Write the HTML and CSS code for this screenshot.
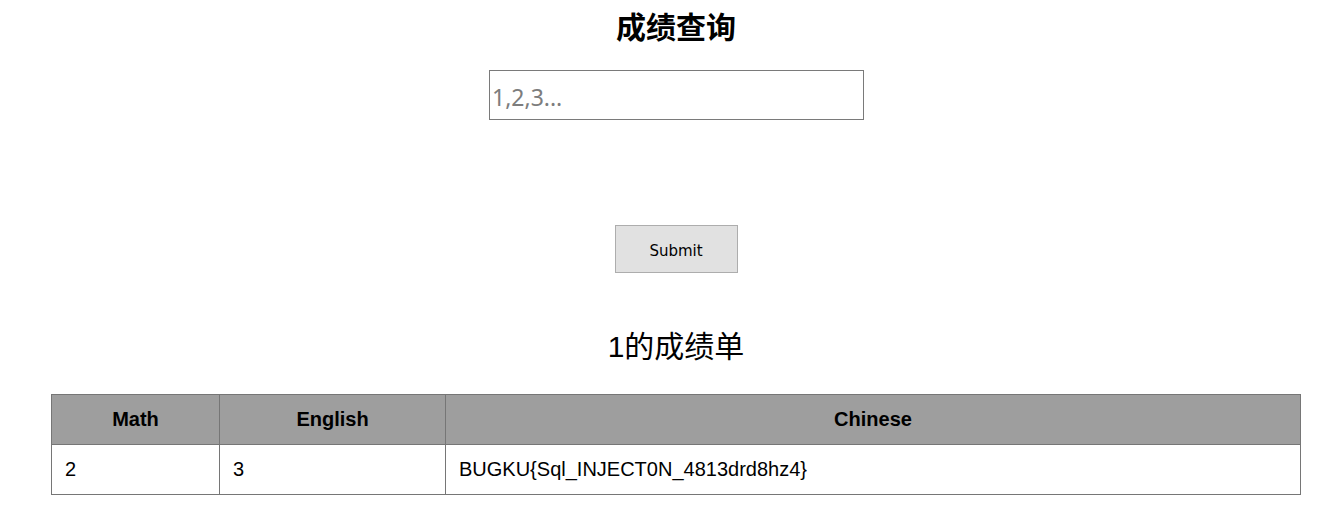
FILE: index.html
```html
<!DOCTYPE html>
<html lang="zh">
<head>
<meta charset="utf-8">
<title>成绩查询</title>
<link rel="stylesheet" href="styles.css">
</head>
<body>
<div class="page">
  <h1 class="title">成绩查询</h1>
  <form class="query">
    <input class="id-input" type="text" placeholder="1,2,3...">
    <button class="submit" type="button">Submit</button>
  </form>
  <h2 class="subtitle">1的成绩单</h2>
  <table class="scores">
    <colgroup>
      <col class="c-math">
      <col class="c-eng">
      <col class="c-chn">
    </colgroup>
    <thead>
      <tr><th>Math</th><th>English</th><th>Chinese</th></tr>
    </thead>
    <tbody>
      <tr><td>2</td><td>3</td><td>BUGKU{Sql_INJECT0N_4813drd8hz4}</td></tr>
    </tbody>
  </table>
</div>
</body>
</html>
```
FILE: styles.css
```css
html, body {
  margin: 0;
  padding: 0;
  background: #ffffff;
}
.page {
  box-sizing: border-box;
  width: 1328px;
  padding-left: 24px;
  display: flex;
  flex-direction: column;
  align-items: center;
  font-family: "Liberation Sans", "Noto Sans CJK SC", sans-serif;
  color: #000;
}
.title {
  margin: 5px 0 0 0;
  height: 40px;
  line-height: 40px;
  font-size: 30px;
  font-weight: 700;
  font-family: "Noto Sans CJK SC", sans-serif;
}
.query {
  margin: 25px 0 0 0;
  display: flex;
  flex-direction: column;
  align-items: center;
}
.id-input {
  box-sizing: border-box;
  width: 375px;
  height: 50px;
  margin: 0 0 0 1px;
  padding: 3px 2px 0 2px;
  border: 1px solid #7a7a7a;
  font-family: "Noto Sans", sans-serif;
  font-size: 23px;
  color: #000;
  outline: none;
}
.id-input::placeholder {
  color: #7d7d7d;
}
.submit {
  box-sizing: border-box;
  margin-top: 105px;
  width: 123px;
  height: 48px;
  padding: 4px 0 0 0;
  background: #e1e1e1;
  border: 1px solid #adadad;
  border-radius: 0;
  font-family: "DejaVu Sans", sans-serif;
  font-size: 15px;
  color: #000;
}
.subtitle {
  margin: 54px 0 0 0;
  height: 40px;
  line-height: 40px;
  font-size: 30px;
  font-weight: 400;
  font-family: "Liberation Sans", "Noto Sans CJK SC", sans-serif;
}
.scores {
  align-self: flex-start;
  margin: 27px 0 0 27px;
  width: 1249px;
  border-collapse: collapse;
  table-layout: fixed;
  font-family: "Liberation Sans", sans-serif;
  font-size: 20px;
}
.c-math { width: 168px; }
.c-eng { width: 226px; }
.c-chn { width: 855px; }
.scores th, .scores td {
  border: 1px solid #767676;
  height: 50px;
  padding: 0 13px;
  box-sizing: border-box;
}
.scores th {
  background: #9e9e9e;
  font-weight: 700;
  text-align: center;
}
.scores td {
  text-align: left;
}
```
